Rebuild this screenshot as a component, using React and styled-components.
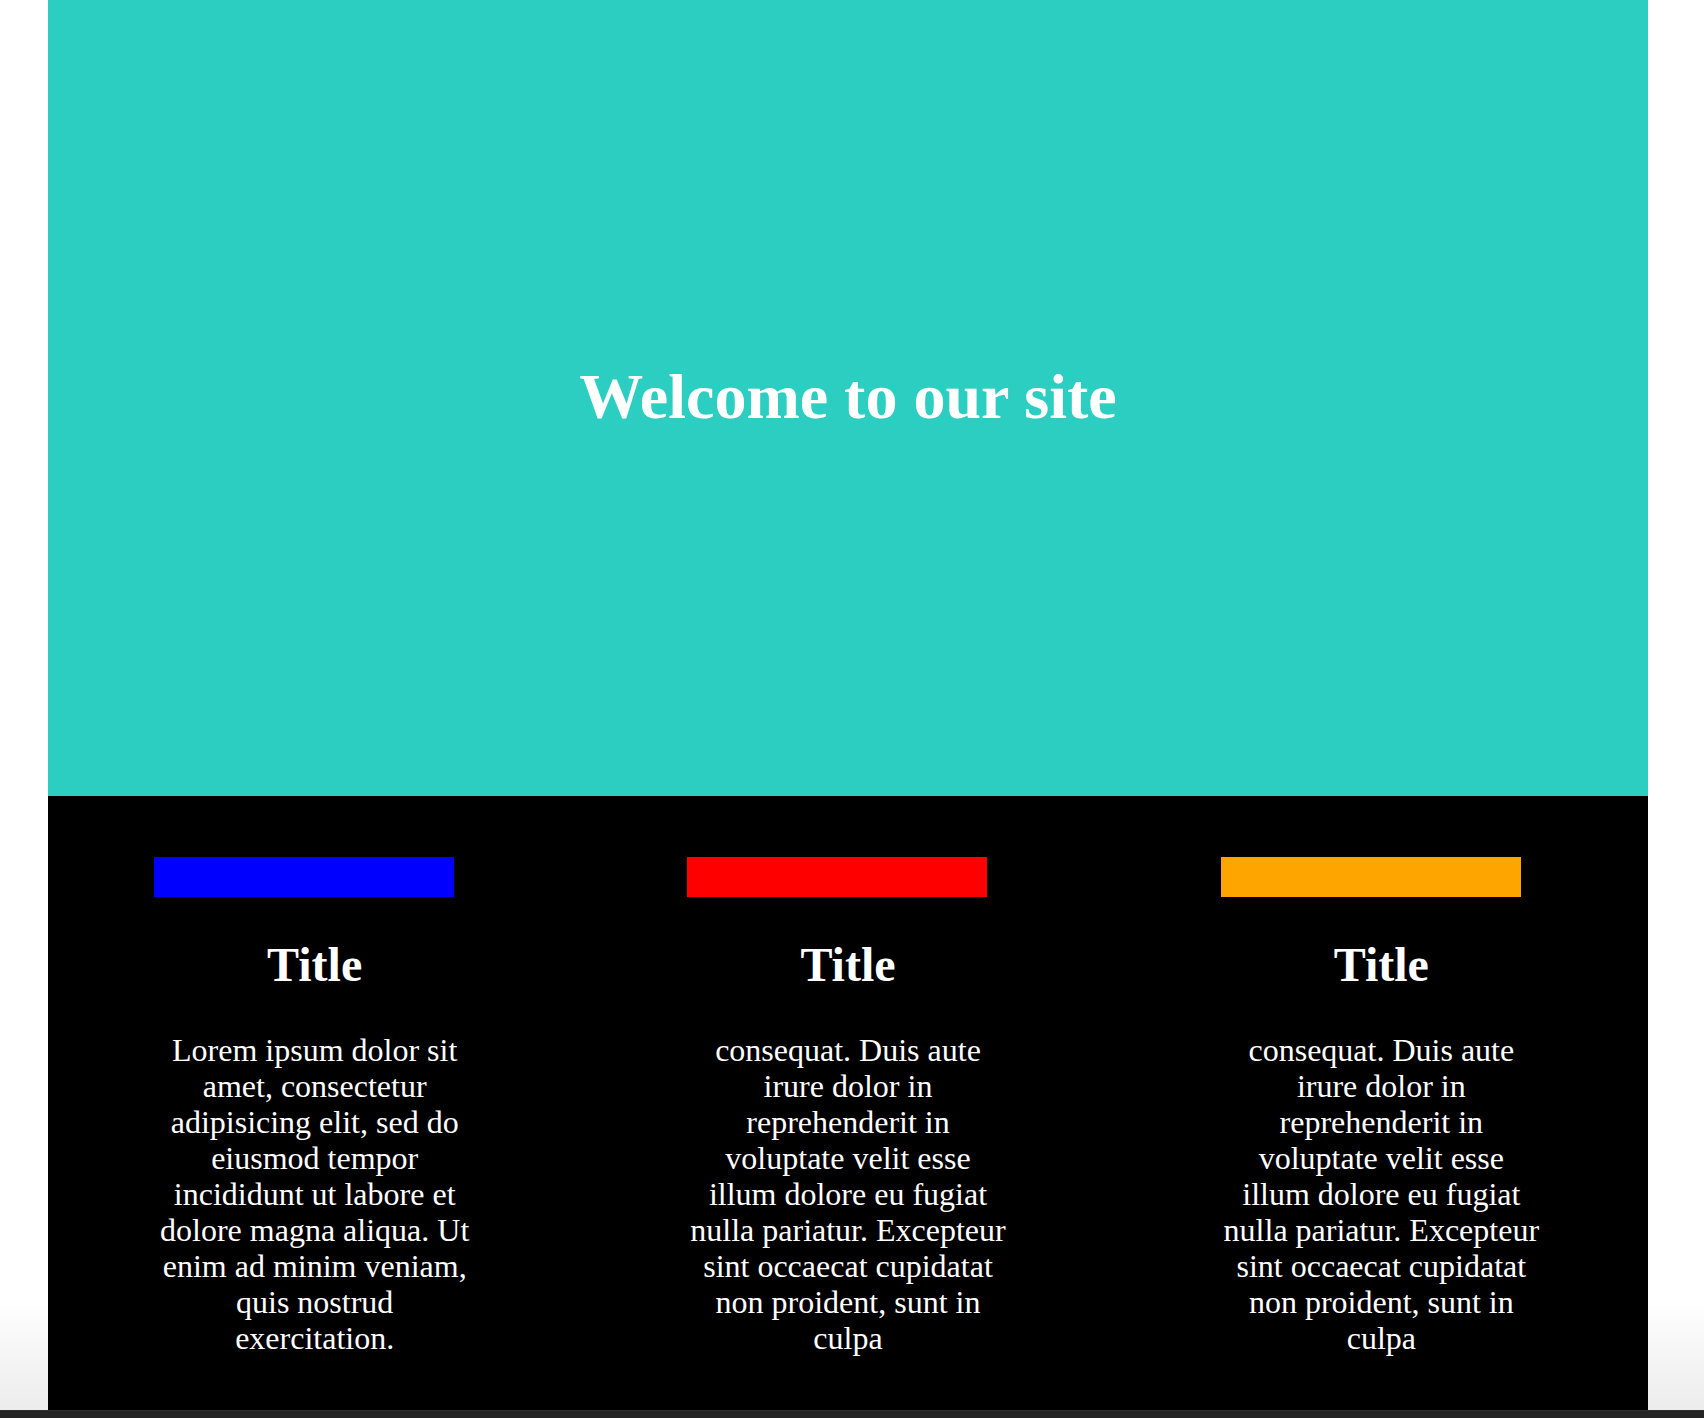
import React from 'react';
import styled, { createGlobalStyle } from 'styled-components';

const GlobalStyle = createGlobalStyle`
  html, body {
    margin: 0;
    padding: 0;
  }
  body {
    font-family: "Liberation Serif", "Times New Roman", serif;
    background: #fff;
  }
`;

const features = [
  {
    color: '#0000ff',
    text: 'Lorem ipsum dolor sit amet, consectetur adipisicing elit, sed do eiusmod tempor incididunt ut labore et dolore magna aliqua. Ut enim ad minim veniam, quis nostrud exercitation.',
  },
  {
    color: '#ff0000',
    text: 'consequat. Duis aute irure dolor in reprehenderit in voluptate velit esse illum dolore eu fugiat nulla pariatur. Excepteur sint occaecat cupidatat non proident, sunt in culpa',
  },
  {
    color: '#ffa500',
    text: 'consequat. Duis aute irure dolor in reprehenderit in voluptate velit esse illum dolore eu fugiat nulla pariatur. Excepteur sint occaecat cupidatat non proident, sunt in culpa',
  },
];

function App() {
  return (
    <>
      <GlobalStyle />
      <Page>
        <Container>
          <Hero>
            <HeroTitle>Welcome to our site</HeroTitle>
          </Hero>
          <Features>
            {features.map((f, i) => (
              <Feature key={i}>
                <ColorBar color={f.color} />
                <FeatureTitle>Title</FeatureTitle>
                <FeatureText>{f.text}</FeatureText>
              </Feature>
            ))}
          </Features>
        </Container>
        <BottomBar />
      </Page>
    </>
  );
}

export default App;

const Page = styled.div`
  width: 100%;
  background: linear-gradient(to bottom, #ffffff 1300px, #ececec 1410px);
`;

const Container = styled.div`
  width: 1600px;
  margin-left: 48px;
`;

const Hero = styled.header`
  height: 796px;
  background-color: #2dcec2;
  display: flex;
  align-items: center;
  justify-content: center;
`;

const HeroTitle = styled.h1`
  margin: 0 0 2px;
  color: #fff;
  font-size: 64px;
  font-weight: bold;
  line-height: 1;
`;

const Features = styled.section`
  display: grid;
  grid-template-columns: repeat(3, 1fr);
  background-color: #000;
  padding: 61px 0 54px;
`;

const Feature = styled.div`
  padding: 0 106px;
  color: #fff;
  text-align: center;
`;

const ColorBar = styled.div`
  width: 300px;
  height: 40px;
  background-color: ${(p) => p.color};
`;

const FeatureTitle = styled.h2`
  margin: 41px 0 41px;
  font-size: 48px;
  line-height: 53px;
  font-weight: bold;
`;

const FeatureText = styled.p`
  margin: 0 1px;
  font-size: 32px;
  line-height: 36px;
`;

const BottomBar = styled.div`
  height: 8px;
  background-color: #242424;
  border-top: 1px solid #2e2e2e;
  box-sizing: border-box;
`;
